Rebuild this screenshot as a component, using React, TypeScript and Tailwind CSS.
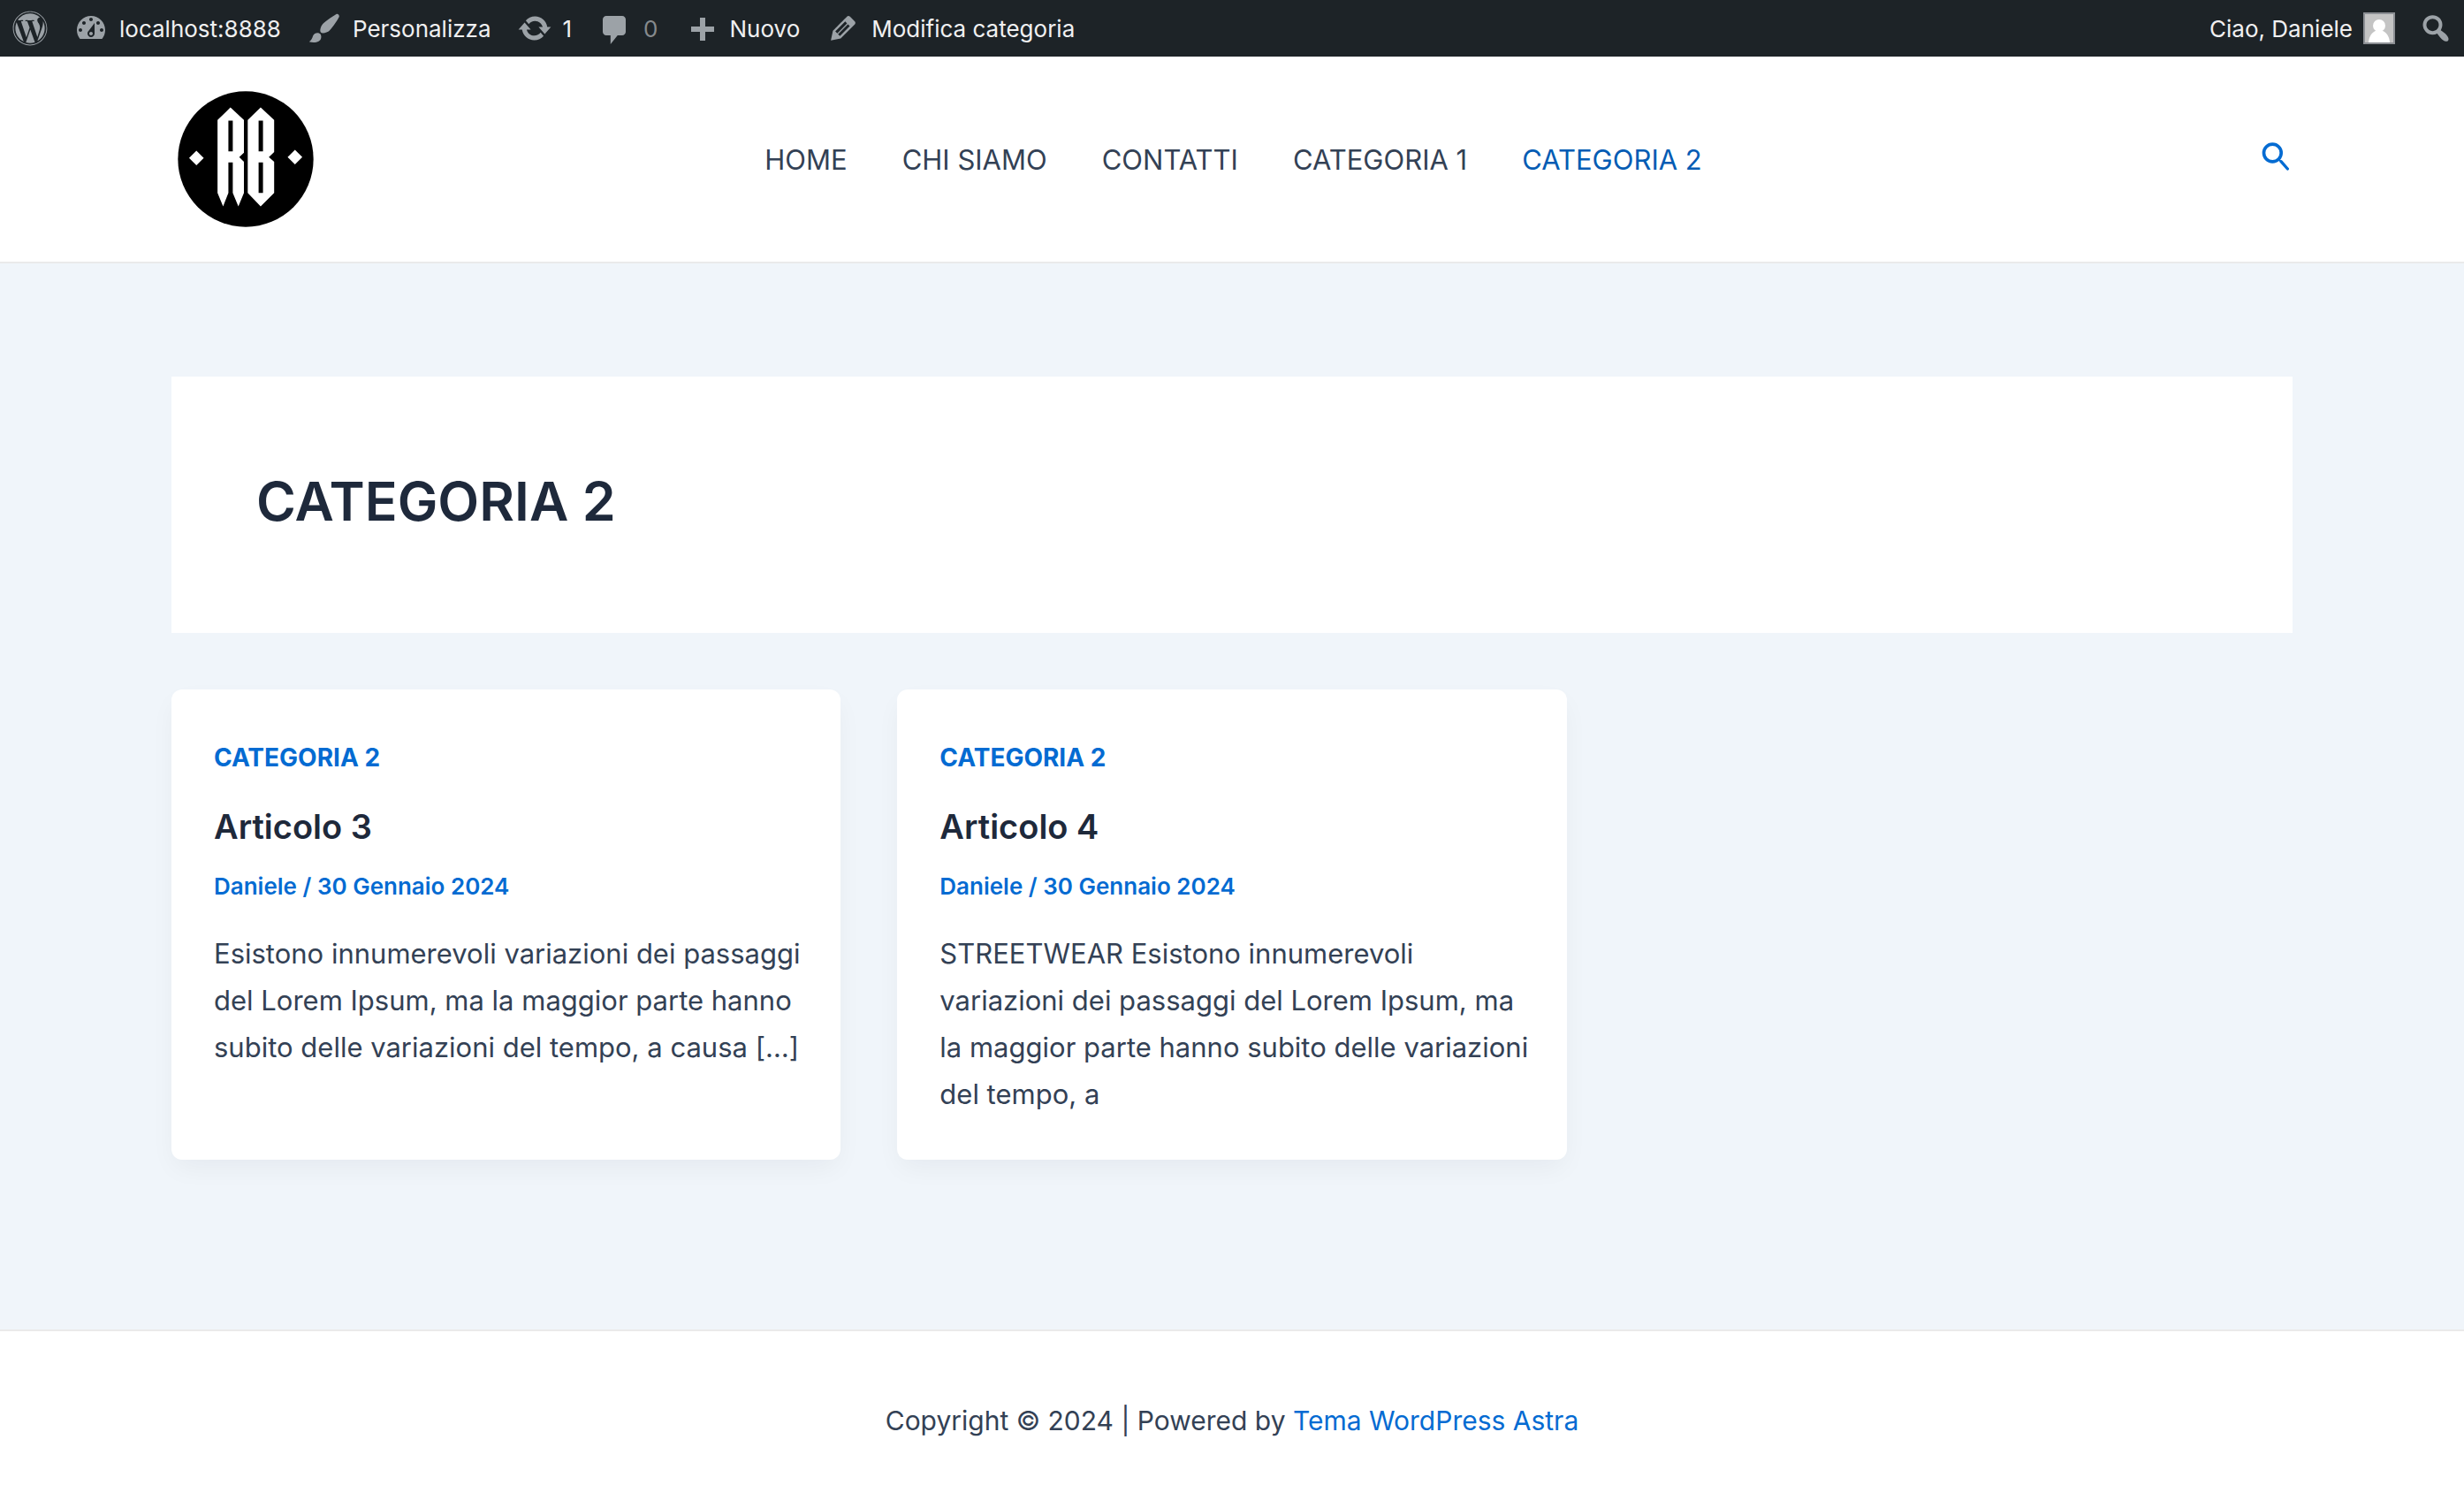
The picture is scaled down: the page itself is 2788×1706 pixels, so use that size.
import type { ReactNode } from "react";
import { FaWordpress } from "react-icons/fa";

const icons = {
  dashboard:
    "M3.76 16h12.48c1.1-1.37 1.76-3.11 1.76-5 0-4.42-3.58-8-8-8s-8 3.58-8 8c0 1.89.66 3.63 1.76 5zM10 4c.55 0 1 .45 1 1s-.45 1-1 1-1-.45-1-1 .45-1 1-1zM6 6c.55 0 1 .45 1 1s-.45 1-1 1-1-.45-1-1 .45-1 1-1zm8 0c.55 0 1 .45 1 1s-.45 1-1 1-1-.45-1-1 .45-1 1-1zm-5.37 5.55L12 7v6c0 1.1-.9 2-2 2s-2-.9-2-2c0-.57.24-1.08.63-1.45zM4 10c.55 0 1 .45 1 1s-.45 1-1 1-1-.45-1-1 .45-1 1-1zm12 0c.55 0 1 .45 1 1s-.45 1-1 1-1-.45-1-1 .45-1 1-1zm-5 3c0-.55-.45-1-1-1s-1 .45-1 1 .45 1 1 1 1-.45 1-1z",
  brush:
    "M18.33 3.57s.27-.8-.31-1.36c-.53-.52-1.22-.24-1.22-.24-.61.3-5.76 3.47-7.67 5.57-.86.96-2.06 3.79-1.09 4.82.92.98 3.96-.17 4.79-1 2.06-2.06 5.21-7.17 5.5-7.79zM1.4 17.65c2.37-1.56 1.46-3.41 3.23-4.64.93-.65 2.22-.62 3.08.29.63.67.8 2.57-.16 3.46-1.57 1.45-4 1.55-6.15.89z",
  update:
    "M10.2 3.28c3.53 0 6.43 2.61 6.92 6h2.08l-3.5 4-3.5-4h2.32c-.45-1.97-2.21-3.45-4.32-3.45-1.45 0-2.73.71-3.54 1.78L4.95 5.66C6.23 4.2 8.11 3.28 10.2 3.28zm-.4 13.44c-3.52 0-6.43-2.61-6.92-6H.8l3.5-4c1.17 1.33 2.33 2.67 3.5 4H5.48c.45 1.97 2.21 3.45 4.32 3.45 1.45 0 2.73-.71 3.54-1.78l1.71 1.95c-1.28 1.46-3.15 2.38-5.25 2.38z",
  comment:
    "M5 3h9c1.1 0 2 .9 2 2v7c0 1.1-.9 2-2 2h-2.6l-4 5v-5H5c-1.1 0-2-.9-2-2V5c0-1.1.9-2 2-2z",
  plus: "M17 9v3h-5v5H9v-5H4V9h5V4h3v5h5z",
  edit:
    "M13.89 3.39l2.71 2.72c.46.46.42 1.24.03 1.64l-8.01 8.02-5.56 1.16 1.16-5.58s7.6-7.63 7.99-8.03c.39-.39 1.22-.39 1.68.07zm-2.73 2.79l-5.59 5.61 1.11 1.11 5.54-5.65zm-2.97 8.23l5.58-5.6-1.07-1.08-5.59 5.6z",
  search:
    "M12.14 4.18c1.87 1.87 2.11 4.75.72 6.89.12.1.22.21.36.31.2.16.47.36.81.59.34.24.56.39.66.47.42.31.73.57.94.78.32.32.6.65.84 1 .25.35.44.69.59 1.04.14.35.21.68.18 1-.02.32-.14.59-.36.81s-.49.34-.81.36c-.31.02-.65-.04-.99-.19-.35-.14-.7-.34-1.04-.59-.35-.24-.68-.52-1-.84-.21-.21-.47-.52-.77-.93-.1-.13-.25-.35-.47-.66-.22-.32-.4-.57-.56-.78-.16-.2-.29-.35-.44-.5-2.07 1.09-4.69.76-6.44-.98-2.14-2.15-2.14-5.64 0-7.78 2.15-2.15 5.63-2.15 7.78 0zm-1.41 6.36c1.36-1.37 1.36-3.58 0-4.95-1.37-1.37-3.59-1.37-4.95 0-1.37 1.37-1.37 3.58 0 4.95 1.36 1.37 3.58 1.37 4.95 0z",
};

function BarIcon({ name }: { name: keyof typeof icons }) {
  return (
    <svg viewBox="0 0 20 20" className="size-10 shrink-0 text-[#9ca2a7]" fill="currentColor" fillRule="evenodd" aria-hidden="true">
      <path d={icons[name]} />
    </svg>
  );
}

function BarLink({ icon, children }: { icon: keyof typeof icons; children: ReactNode }) {
  return (
    <a href="#" className="flex items-center gap-3">
      <BarIcon name={icon} />
      {children}
    </a>
  );
}

function AdminBar() {
  return (
    <div className="flex h-16 items-center justify-between bg-[#1d2327] pr-3 pl-3.5 text-[26px] whitespace-nowrap text-[#f0f0f1]">
      <nav aria-label="Barra degli strumenti" className="flex items-center gap-[29px]">
        <a href="#" aria-label="Informazioni su WordPress">
          <FaWordpress className="size-10 text-[#9ca2a7]" />
        </a>
        <BarLink icon="dashboard">localhost:8888</BarLink>
        <BarLink icon="brush">Personalizza</BarLink>
        <BarLink icon="update">1</BarLink>
        <BarLink icon="comment">
          <span className="text-[#868a8d]">0</span>
        </BarLink>
        <BarLink icon="plus">Nuovo</BarLink>
        <BarLink icon="edit">Modifica categoria</BarLink>
      </nav>
      <div className="flex items-center gap-[26px]">
        <a href="#" className="flex items-center gap-3">
          Ciao, Daniele
          <svg viewBox="0 0 96 96" className="size-9 border-2 border-[#8c8f94] bg-[#c4c4c4]" fill="#fff" aria-hidden="true">
            <circle cx="48" cy="39" r="21" />
            <path d="M12 96C13 74 26 59 38 56H58C70 59 83 74 84 96Z" />
          </svg>
        </a>
        <button type="button" aria-label="Cerca">
          <BarIcon name="search" />
        </button>
      </div>
    </div>
  );
}

function Logo() {
  return (
    <svg viewBox="63 67 462 464" className="size-[154px]" role="img" aria-label="RB">
      <circle cx="294" cy="299" r="231" fill="#000" />
      <g fill="#fff" fillRule="evenodd">
        <path d="M242 123 288 166V277L272 292 288 308V414L269 460 250 414V310H235V414L217 460 198 414V166ZM235 168V273H250V168Z" />
        <path d="M345 123 391 166V275L373 292 391 308V414L345 460 301 414V166ZM338 168V273H353V168ZM338 310V414H353V310Z" />
        <path d="M126 270 151 295 126 320 101 295ZM462 267 487 292 462 317 437 292Z" />
      </g>
    </svg>
  );
}

const menu = ["HOME", "CHI SIAMO", "CONTATTI", "CATEGORIA 1", "CATEGORIA 2"];

function Header() {
  return (
    <header className="border-b-2 border-[#eaeaea] bg-white px-6">
      <div className="mx-auto flex min-h-[232px] max-w-[2400px] items-center">
        <div className="flex-1 pl-[7px]">
          <a href="#" className="inline-block align-middle">
            <Logo />
          </a>
        </div>
        <nav aria-label="Menu principale" className="flex gap-[62px] pt-0.5 text-[31px]">
          {menu.map((label) => (
            <a
              key={label}
              href="#"
              aria-current={label === "CATEGORIA 2" ? "page" : undefined}
              className="aria-[current=page]:text-[#045cb4]"
            >
              {label}
            </a>
          ))}
        </nav>
        <div className="flex flex-1 justify-end pr-1 pb-1.5">
          <button type="button" aria-label="Cerca nel sito" className="text-[#046bd2]">
            <svg viewBox="27 33 93 96" className="h-8 w-[31px]" fill="none" stroke="currentColor" aria-hidden="true">
              <circle cx="64" cy="69" r="29.5" strokeWidth="11" />
              <path d="M86 92 94 99" strokeWidth="6" />
              <path d="M93 98 115 123" strokeWidth="10" strokeLinecap="round" />
            </svg>
          </button>
        </div>
      </div>
    </header>
  );
}

const posts = [
  {
    title: "Articolo 3",
    text: "Esistono innumerevoli variazioni dei passaggi del Lorem Ipsum, ma la maggior parte hanno subito delle variazioni del tempo, a causa […]",
  },
  {
    title: "Articolo 4",
    text: "STREETWEAR Esistono innumerevoli variazioni dei passaggi del Lorem Ipsum, ma la maggior parte hanno subito delle variazioni del tempo, a",
  },
];

function PostCard({ title, text }: { title: string; text: string }) {
  return (
    <article className="rounded-xl bg-white pt-12 pr-10 pb-12 pl-12 shadow-[0_12px_30px_-4px_rgba(16,24,40,0.05)]">
      <a href="#" className="block text-[28px] leading-[58px] font-bold text-[#046bd2]">
        CATEGORIA 2
      </a>
      <h2 className="mt-6 text-[38px] leading-[50px] font-semibold text-[#1e293b]">
        <a href="#">{title}</a>
      </h2>
      <p className="mt-6 text-[26px] leading-[38px] font-semibold text-[#046bd2]">
        <a href="#">Daniele</a> / <a href="#">30 Gennaio 2024</a>
      </p>
      <p className="mt-[30px] text-[31px] leading-[53px]">{text}</p>
    </article>
  );
}

export default function App() {
  return (
    <div className="flex min-h-screen flex-col bg-[#f0f5fa] font-['Inter',sans-serif] text-[#334155]">
      <AdminBar />
      <Header />
      <main className="grow px-6 pt-32 pb-48">
        <div className="mx-auto flex max-w-[2400px] flex-col gap-16">
          <section className="bg-white px-24 pt-24 pb-[104px]">
            <h1 className="text-[61px] leading-[90px] font-semibold text-[#1e293b]">CATEGORIA 2</h1>
          </section>
          <div className="grid grid-cols-3 gap-16">
            {posts.map((post) => (
              <PostCard key={post.title} {...post} />
            ))}
          </div>
        </div>
      </main>
      <footer className="border-t-2 border-[#eaeaea] bg-white px-6 pt-[73px] pb-[71px] text-center text-[30px] leading-[56px]">
        Copyright © 2024 | Powered by{" "}
        <a href="#" className="text-[#046bd2]">
          Tema WordPress Astra
        </a>
      </footer>
    </div>
  );
}
